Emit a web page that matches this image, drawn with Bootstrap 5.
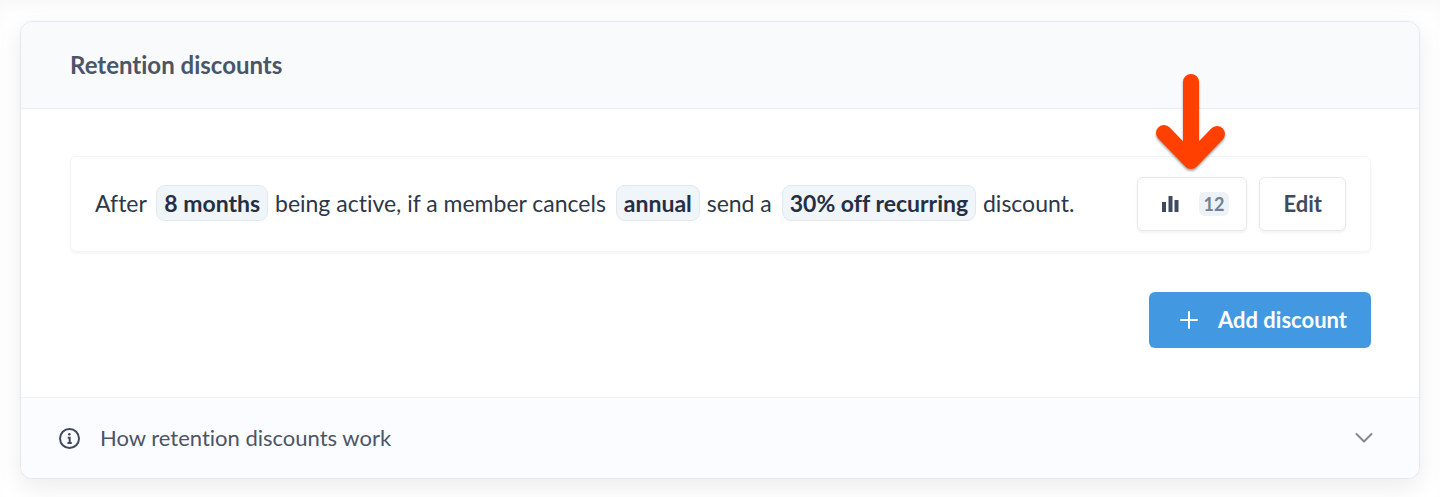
<!DOCTYPE html>
<html lang="en">
<head>
<meta charset="utf-8">
<meta name="viewport" content="width=device-width, initial-scale=1">
<title>Retention discounts</title>
<link href="https://cdn.jsdelivr.net/npm/bootstrap@5.3.0/dist/css/bootstrap.min.css" rel="stylesheet">
<style>
body{font-family:Lato,"Open Sans",sans-serif;font-size:22px;line-height:32px;color:#2d3748;background:#fff;box-shadow:inset 0 12px 24px -12px rgba(0,0,0,.05)}
body,button{font-variant-ligatures:none}
.page-wrap{padding:21px 20px 19px}
.panel{border:1px solid #e2e8f0;border-radius:12px;box-shadow:0 8px 24px rgba(0,0,0,.08);overflow:hidden}
.panel-head{background:#f8fafc;border-bottom:1px solid #e6eef6;padding:27px 49px}
.panel-head h2{font-size:24px;line-height:32px;color:#4a5568}
.panel-main{padding:47px 48px 49px 49px}
.rule{border:1px solid #f0f4f8;border-radius:6px;padding:20px 24px;box-shadow:0 2px 3px rgba(0,0,0,.04);margin-bottom:40px}
.rule-text{font-size:23px;line-height:32px;padding-bottom:2px}
.pill{font-weight:700;color:#252f44;border:1px solid #e2e8f0;background:#f0f5f9;border-radius:9px;padding:3px 7px;margin:0 1px 0 4px}
.btn-plain{font-size:22px;line-height:32px;font-weight:700;color:#3f4a5f;background:#fff;border:1px solid #e6e8f0;border-radius:6px;padding:10px 23px;box-shadow:0 2px 3px rgba(0,0,0,.05)}
.btn-stats{padding:10px 17px 10px 24px}
.rule-actions{gap:12px}
.count{font-size:18px;line-height:24px;color:#718096;background:#edf2f7;border-radius:6px;padding:0 5px}
.btn-add{font-size:22px;line-height:32px;font-weight:700;color:#fff;background:#4299e1;border:0;border-radius:6px;padding:12px 24px 12px 31px}
.btn-add:hover{color:#fff;background:#3182ce}
.icon-gap{margin-left:20px}
.pointer{bottom:60px;left:17px;filter:drop-shadow(0 2px 1px rgba(0,0,0,.35));pointer-events:none}
.panel-foot{background:#fbfcff;border:0;border-top:1px solid #edf2f7;color:#4a5568;padding:24px 46px 24px 38px}
</style>
</head>
<body>
<main class="page-wrap">
<section class="panel bg-white">
  <header class="panel-head"><h2 class="fw-bold m-0">Retention discounts</h2></header>
  <div class="panel-main">
    <div class="rule d-flex flex-wrap align-items-center justify-content-between gap-2">
      <p class="rule-text m-0">After <strong class="pill">8 months</strong> being active, if a member cancels <strong class="pill">annual</strong> send a <strong class="pill">30% off recurring</strong> discount.</p>
      <div class="rule-actions d-flex">
        <div class="position-relative d-flex">
          <svg class="pointer position-absolute" width="72" height="98" viewBox="0 0 72 98" fill="none" stroke="#ff4000" stroke-width="16" stroke-linecap="round" stroke-linejoin="round" aria-hidden="true"><path d="M37 9v79M10 60l27 28 26-27"/></svg>
          <button type="button" class="btn btn-plain btn-stats d-flex align-items-center">
            <svg width="17" height="16" fill="#3f4a5f" aria-hidden="true"><path d="M0 6h4v10H0zM6.500 0h4v16h-4zM12.500 4h4v12h-4z"/></svg>
            <span class="count icon-gap">12</span>
          </button>
        </div>
        <button type="button" class="btn btn-plain">Edit</button>
      </div>
    </div>
    <div class="d-flex justify-content-end">
      <button type="button" class="btn btn-add d-flex align-items-center">
        <svg width="18" height="18" fill="none" stroke="#fff" stroke-width="2" stroke-linecap="round" aria-hidden="true"><path d="M9 1v16M1 9h16"/></svg>
        <span class="icon-gap">Add discount</span>
      </button>
    </div>
  </div>
  <button type="button" class="panel-foot w-100 d-flex align-items-center text-start" aria-expanded="false">
    <svg width="21" height="21" viewBox="0 0 21 21" fill="none" stroke="#3f4a5f" stroke-width="2" aria-hidden="true"><circle cx="10.500" cy="10.500" r="9.500"/><path d="M8.700 9.700h2v5M8.500 14.900h4.300"/><circle cx="10.300" cy="6.300" r="1.300" fill="#3f4a5f" stroke="none"/></svg>
    <span class="icon-gap">How retention discounts work</span>
    <svg class="ms-auto" width="18" height="12" fill="none" stroke="#85858f" stroke-width="2" stroke-linecap="round" stroke-linejoin="round" aria-hidden="true"><path d="M1.500 2L9 9.500 16.500 2"/></svg>
  </button>
</section>
</main>
<script src="https://cdn.jsdelivr.net/npm/bootstrap@5.3.0/dist/js/bootstrap.bundle.min.js"></script>
</body>
</html>
